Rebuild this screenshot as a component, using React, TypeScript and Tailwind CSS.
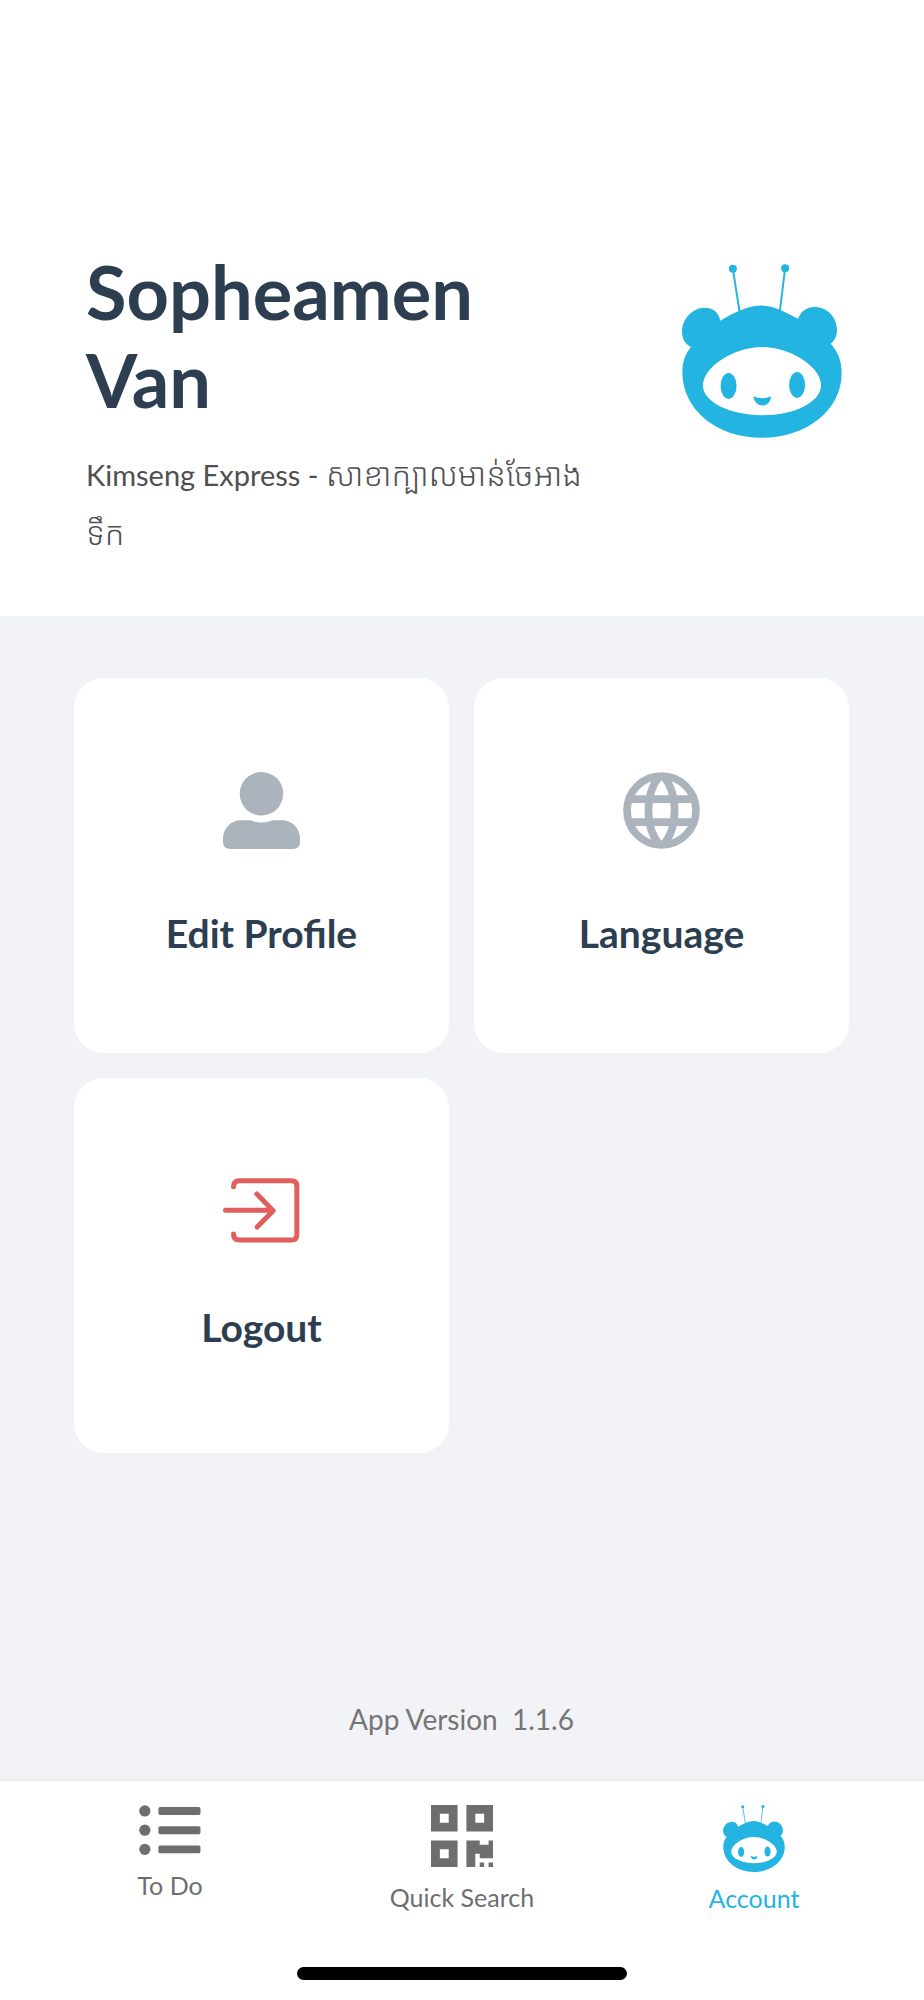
import React from 'react'

const Mascot = ({ className }: { className: string }) => (
  <svg viewBox="65 42 481 522" className={className} fill="currentColor" aria-hidden="true">
    <circle cx="218" cy="56" r="12" />
    <circle cx="375" cy="54" r="12" />
    <path d="M218 56L238 185M375 54L359 185" stroke="currentColor" strokeWidth="6" fill="none" />
    <path
      fillRule="evenodd"
      d="M180 212C220 188 262 166 304 166C342 166 378 188 414 206C423 183 441 171 463 171C502 171 531 203 531 240C531 257 524 272 512 281C535 306 545 335 545 370C545 480 440 564 305 564C170 564 66 480 66 366C66 338 74 312 92 291C74 282 65 265 65 245C65 206 98 173 133 173C158 173 176 187 180 212Z
      M306 291C220 291 128 352 128 407C128 456 208 496 306 496C404 496 483 456 483 405C483 352 392 291 306 291Z"
    />
    <ellipse cx="205" cy="408" rx="24" ry="39" />
    <ellipse cx="411" cy="405" rx="24" ry="39" />
    <path d="M279 440Q306 450 333 440Q330 467 306 467Q284 465 279 440Z" />
  </svg>
)

const UserIcon = () => (
  <svg viewBox="70 67 230 230" className="size-[77px] text-[#abb4bd]" fill="currentColor" aria-hidden="true">
    <circle cx="185" cy="132" r="65" />
    <path d="M124 211H152Q185 225 218 211H246C276 211 300 235 300 265V276Q300 297 279 297H91Q70 297 70 276V265C70 235 94 211 124 211Z" />
  </svg>
)

const GlobeIcon = () => (
  <svg
    viewBox="70 67 230 230"
    className="size-[77px] text-[#abb4bd]"
    fill="none"
    stroke="currentColor"
    strokeWidth="23"
    aria-hidden="true"
  >
    <circle cx="185" cy="182" r="103" />
    <path d="M86 148H284M86 217H284" />
    <path d="M180 78C156 106 146 143 146 182C146 221 156 258 180 286M190 78C214 106 224 143 224 182C224 221 214 258 190 286" />
  </svg>
)

const LogoutIcon = () => (
  <svg
    viewBox="70 56 230 195"
    className="h-[65px] w-[77px] text-[#e05e5e]"
    fill="none"
    stroke="currentColor"
    strokeWidth="15"
    strokeLinecap="round"
    strokeLinejoin="round"
    aria-hidden="true"
  >
    <path d="M101 82Q101 64 119 64H275Q291 64 291 80V226Q291 242 275 242H119Q101 242 101 224" />
    <path d="M77 153H218M171 104L220 154L172 203" />
  </svg>
)

const ListIcon = () => (
  <svg viewBox="116 105 186 151" className="h-[50px] w-[62px]" fill="currentColor" aria-hidden="true">
    <circle cx="133" cy="123" r="17" />
    <circle cx="133" cy="181" r="17" />
    <circle cx="133" cy="239" r="17" />
    <rect x="174" y="111" width="127" height="24" rx="5" />
    <rect x="174" y="169" width="127" height="24" rx="5" />
    <rect x="174" y="227" width="127" height="24" rx="5" />
  </svg>
)

const QrIcon = () => (
  <svg viewBox="0 0 14 14" className="size-[62px]" fill="currentColor" fillRule="evenodd" aria-hidden="true">
    <path d="M0 0H6V6H0ZM2 2V4H4V2Z" />
    <path d="M8 0H14V6H8ZM10 2V4H12V2Z" />
    <path d="M0 8H6V14H0ZM2 10V12H4V10Z" />
    <path d="M8 8H11V9H13V8H14V12H11V11H10V14H8ZM11 13H12V14H11ZM13 13H14V14H13Z" />
  </svg>
)

const cards = [
  { title: 'Edit Profile', icon: <UserIcon /> },
  { title: 'Language', icon: <GlobeIcon /> },
  { title: 'Logout', icon: <LogoutIcon /> },
]

const tabs = [
  { title: 'To Do', icon: <ListIcon />, active: false },
  { title: 'Quick Search', icon: <QrIcon />, active: false },
  { title: 'Account', icon: <Mascot className="h-[67px] w-[62px]" />, active: true },
]

const App = () => {
  return (
    <div className="flex min-h-screen flex-col bg-[#f1f3f7] font-['Lato','Noto_Sans_Khmer',sans-serif]">
      <header className="flex items-start justify-between bg-white pt-[248px] pr-[82px] pb-[53px] pl-[86px]">
        <div>
          <h1 className="text-[74px] leading-[88px] font-bold text-[#2c3e50]">
            Sopheamen
            <br />
            Van
          </h1>
          <p className="mt-[21px] text-[29px] leading-[58px] text-[#4f4f4f]">
            Kimseng Express -{' '}
            <span lang="km" className="text-[32px] font-light">
              សាខាក្បាលមាន់ចែអាង
              <br />
              ទឹក
            </span>
          </p>
        </div>
        <Mascot className="mt-4 h-[174px] w-[160px] shrink-0 text-[#24b4e2]" />
      </header>

      <main className="flex flex-1 flex-col pt-[62px] pr-[75px] pb-10 pl-[74px]">
        <div className="grid grid-cols-2 gap-[25px]">
          {cards.map((card) => (
            <button
              key={card.title}
              type="button"
              className="flex aspect-square flex-col items-center justify-center gap-[58px] rounded-[30px] bg-white"
            >
              {card.icon}
              <span className="text-[39px] leading-[52px] font-bold text-[#2c3e50]">{card.title}</span>
            </button>
          ))}
        </div>
        <p className="mt-auto text-center text-[28px] leading-[40px] whitespace-pre text-[#757575]">
          {'App Version  1.1.6'}
        </p>
      </main>

      <nav className="border-t-2 border-[#ececee] bg-white px-6 pt-6 pb-5">
        <div className="grid h-[162px] grid-cols-3 items-start">
          {tabs.map((tab) => (
            <a
              key={tab.title}
              href="#"
              aria-current={tab.active ? 'page' : undefined}
              className={
                tab.active
                  ? 'flex flex-col items-center gap-2.5 text-[#24b4e2]'
                  : 'flex flex-col items-center gap-3.5 text-[#6e6e6e]'
              }
            >
              {tab.icon}
              <span className="text-[25px] leading-[32px]">{tab.title}</span>
            </a>
          ))}
        </div>
        {/* home indicator */}
        <div className="mx-auto h-[13px] w-[330px] rounded-full bg-black" />
      </nav>
    </div>
  )
}

export default App
